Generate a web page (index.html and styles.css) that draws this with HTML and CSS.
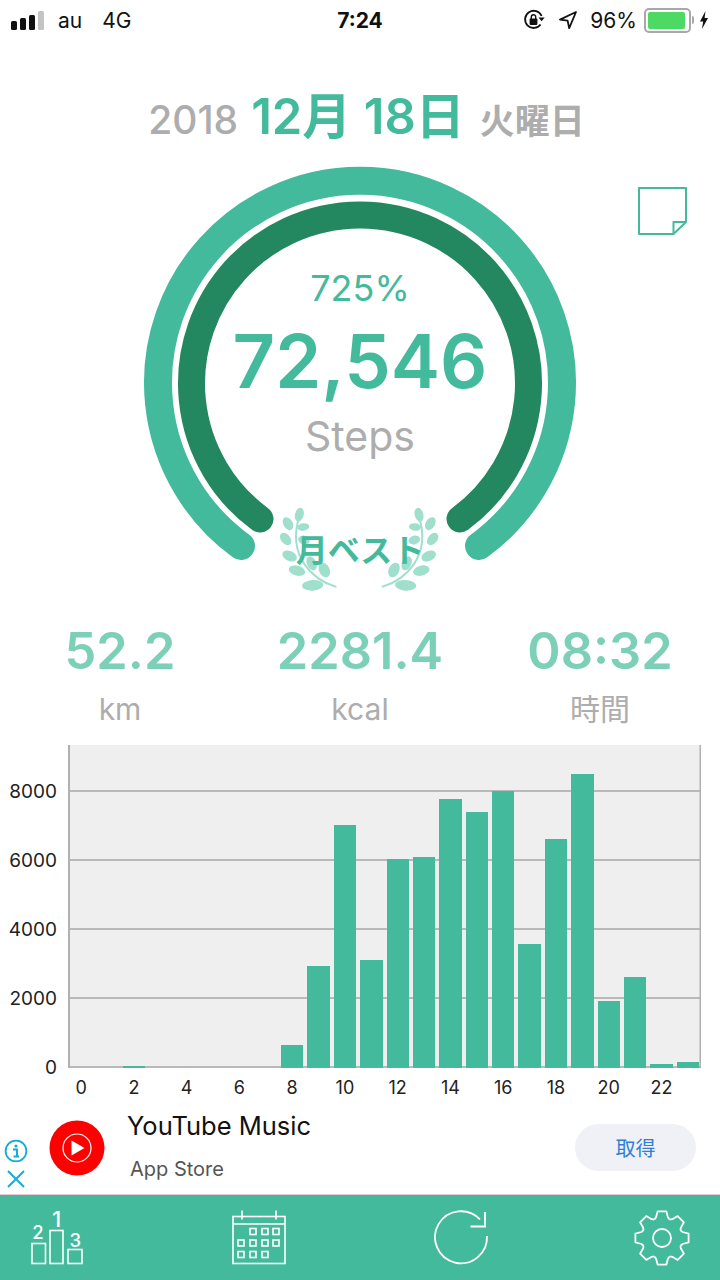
FILE: index.html
```html
<!DOCTYPE html>
<html>
  <head>
    <title>Steps</title>
    <link rel="stylesheet" href="styles.css">
  </head>
  <body>
    <div class="status-bar">
      <div class="status-left">
        <div class="signal">
          <span class="signal-bar signal-1"></span>
          <span class="signal-bar signal-2"></span>
          <span class="signal-bar signal-3"></span>
          <span class="signal-bar signal-4"></span>
        </div>
        <span class="carrier">au</span>
        <span class="network">4G</span>
      </div>
      <div class="status-time">7:24</div>
      <div class="status-right">
        <svg class="lock-icon" width="24" height="24" viewBox="0 0 24 24">
          <path d="M18.6 16.5A8.6 8.6 0 1 1 19.6 8" fill="none" stroke="#111" stroke-width="1.8"/>
          <path d="M16.5 9.5h6.2l-3.1 3.8z" fill="#111"/>
          <rect x="7.6" y="10.6" width="7.8" height="6.4" rx="1" fill="#111"/>
          <path d="M9.3 11V8.9a2.2 2.2 0 0 1 4.4 0V11" fill="none" stroke="#111" stroke-width="1.4"/>
        </svg>
        <svg class="arrow-icon" width="20" height="20" viewBox="0 0 20 20">
          <path d="M18 2 2 9.6l7.6 1 1.6 7.6z" fill="none" stroke="#111" stroke-width="1.8" stroke-linejoin="round"/>
        </svg>
        <span class="battery-text">96%</span>
        <div class="battery">
          <div class="battery-fill"></div>
        </div>
        <div class="battery-tip"></div>
        <svg class="bolt-icon" width="10" height="20" viewBox="0 0 10 20">
          <path d="M6.5 1 1 11.5h3.2L3 19l6-11H5.6z" fill="#111"/>
        </svg>
      </div>
    </div>

    <div class="date-row">
      <span class="date-year">2018</span>
      <span class="date-day">12月 18日</span>
      <span class="date-week">火曜日</span>
    </div>

    <div class="gauge">
      <svg class="gauge-svg" width="720" height="450" viewBox="0 150 720 450">
        <path d="M241 546A202 202 0 1 1 479 546" fill="none" stroke="#43ba9b" stroke-width="28" stroke-linecap="round"/>
        <path d="M260 519A168.5 168.5 0 1 1 460 519" fill="none" stroke="#23875f" stroke-width="27" stroke-linecap="round"/>
        <g transform="translate(220 480) scale(0.3333)">
          <use href="#laurel-left" transform="translate(835 0) scale(-1 1)"/>
          <g id="laurel-left" class="laurel">
            <path d="M347 320C280 300 200 230 238 110" fill="none" stroke="#a0dfcc" stroke-width="6" stroke-linecap="round"/>
            <ellipse cx="238" cy="104" rx="13" ry="21" transform="rotate(15 238 104)"/>
            <ellipse cx="204" cy="131" rx="14" ry="21" transform="rotate(-30 204 131)"/>
            <ellipse cx="250" cy="141" rx="18" ry="11" transform="rotate(-8 250 141)"/>
            <ellipse cx="197" cy="177" rx="14" ry="21" transform="rotate(-40 197 177)"/>
            <ellipse cx="252" cy="180" rx="18" ry="13" transform="rotate(15 252 180)"/>
            <ellipse cx="209" cy="228" rx="23" ry="15" transform="rotate(25 209 228)"/>
            <ellipse cx="275" cy="250" rx="14" ry="22" transform="rotate(-25 275 250)"/>
            <ellipse cx="231" cy="272" rx="25" ry="15" transform="rotate(15 231 272)"/>
            <ellipse cx="313" cy="270" rx="16" ry="23" transform="rotate(-25 313 270)"/>
            <ellipse cx="278" cy="316" rx="32" ry="16" transform="rotate(-4 278 316)"/>
          </g>
        </g>
      </svg>

      <div class="gauge-center">
        <div class="gauge-percent">725%</div>
        <div class="gauge-steps">72,546</div>
        <div class="gauge-unit">Steps</div>
      </div>

      <div class="gauge-best">月ベスト</div>

      <svg class="note-icon" width="50" height="50" viewBox="0 0 50 50">
        <path d="M1 1H48V35L35.5 47H1Z" fill="none" stroke="#43ba9b" stroke-width="2" stroke-linejoin="round"/>
        <path d="M35.5 47V35H48" fill="none" stroke="#43ba9b" stroke-width="2" stroke-linejoin="round"/>
      </svg>
    </div>

    <div class="stats">
      <div class="stat">
        <div class="stat-value">52.2</div>
        <div class="stat-label">km</div>
      </div>
      <div class="stat">
        <div class="stat-value">2281.4</div>
        <div class="stat-label">kcal</div>
      </div>
      <div class="stat">
        <div class="stat-value">08:32</div>
        <div class="stat-label">時間</div>
      </div>
    </div>

    <div class="chart">
      <div class="y-axis">
        <div class="y-label">8000</div>
        <div class="y-label">6000</div>
        <div class="y-label">4000</div>
        <div class="y-label">2000</div>
        <div class="y-label">0</div>
      </div>
      <div class="chart-main">
        <div class="plot">
          <div class="bar"></div>
          <div class="bar"></div>
          <div class="bar" style="height: 2px"></div>
          <div class="bar"></div>
          <div class="bar"></div>
          <div class="bar"></div>
          <div class="bar"></div>
          <div class="bar"></div>
          <div class="bar" style="height: 23px"></div>
          <div class="bar" style="height: 102px"></div>
          <div class="bar" style="height: 243px"></div>
          <div class="bar" style="height: 108px"></div>
          <div class="bar" style="height: 209px"></div>
          <div class="bar" style="height: 211px"></div>
          <div class="bar" style="height: 269px"></div>
          <div class="bar" style="height: 256px"></div>
          <div class="bar" style="height: 277px"></div>
          <div class="bar" style="height: 124px"></div>
          <div class="bar" style="height: 229px"></div>
          <div class="bar" style="height: 294px"></div>
          <div class="bar" style="height: 67px"></div>
          <div class="bar" style="height: 91px"></div>
          <div class="bar" style="height: 4px"></div>
          <div class="bar" style="height: 6px"></div>
        </div>
        <div class="x-axis">
          <div class="x-label">0</div>
          <div class="x-label">2</div>
          <div class="x-label">4</div>
          <div class="x-label">6</div>
          <div class="x-label">8</div>
          <div class="x-label">10</div>
          <div class="x-label">12</div>
          <div class="x-label">14</div>
          <div class="x-label">16</div>
          <div class="x-label">18</div>
          <div class="x-label">20</div>
          <div class="x-label">22</div>
        </div>
      </div>
    </div>

    <div class="ad">
      <div class="ad-controls">
        <svg width="24" height="24" viewBox="0 0 24 24">
          <circle cx="12" cy="12" r="10.4" fill="none" stroke="#12acd6" stroke-width="1.8"/>
          <circle cx="12" cy="7" r="1.6" fill="#12acd6"/>
          <path d="M9 10.5h4V17M9.5 17.5h5.5" fill="none" stroke="#12acd6" stroke-width="2"/>
        </svg>
        <svg width="20" height="20" viewBox="0 0 20 20">
          <path d="M2 2 18 18M18 2 2 18" fill="none" stroke="#12acd6" stroke-width="2"/>
        </svg>
      </div>
      <svg class="ad-logo" width="56" height="56" viewBox="0 0 56 56">
        <circle cx="28" cy="28" r="27.5" fill="#fe0000"/>
        <circle cx="28" cy="28" r="14" fill="none" stroke="white" stroke-width="1.2"/>
        <path d="M22.5 20.5 35.5 28 22.5 35.5Z" fill="white"/>
      </svg>
      <div class="ad-text">
        <div class="ad-title">YouTube Music</div>
        <div class="ad-store">App Store</div>
      </div>
      <button class="ad-button">取得</button>
    </div>

    <div class="tab-bar">
      <svg class="tab-icon" width="54" height="56" viewBox="0 0 54 56">
        <g fill="none" stroke="white" stroke-width="1.6">
          <rect x="1" y="33.5" width="13.5" height="20"/>
          <rect x="19" y="20.5" width="13" height="33"/>
          <rect x="37" y="39.5" width="14" height="14"/>
        </g>
        <text x="7" y="29" class="podium-number">2</text>
        <text x="25.7" y="17" class="podium-first">1</text>
        <text x="44.3" y="36.5" class="podium-number">3</text>
      </svg>
      <svg class="tab-icon" width="54" height="56" viewBox="0 0 54 56">
        <g fill="none" stroke="white" stroke-width="1.6">
          <rect x="1" y="6.5" width="52" height="47"/>
          <path d="M1 14H53M10 0.5V9.5M44 0.5V9.5"/>
          <rect x="18" y="18.5" width="6" height="6"/>
          <rect x="30" y="18.5" width="6" height="6"/>
          <rect x="41" y="18.5" width="6" height="6"/>
          <rect x="6" y="30" width="6" height="6"/>
          <rect x="18" y="30" width="6" height="6"/>
          <rect x="30" y="30" width="6" height="6"/>
          <rect x="41" y="30" width="6" height="6"/>
          <rect x="6" y="41.5" width="6" height="6"/>
          <rect x="18" y="41.5" width="6" height="6"/>
          <rect x="30" y="41.5" width="6" height="6"/>
        </g>
      </svg>
      <svg class="tab-icon" width="54" height="56" viewBox="0 0 54 56">
        <g fill="none" stroke="white" stroke-width="1.8">
          <path d="M53 26A26 26 0 1 1 46 9.5"/>
          <path d="M36.5 16.5H51V2"/>
        </g>
      </svg>
      <svg class="tab-icon" width="54" height="56" viewBox="-27 -28 54 56">
        <defs>
          <polyline id="gear-tooth" points="-7.6,-18.5 -6,-20.6 -4.4,-26.6 4.4,-26.6 6,-20.6 7.6,-18.5" fill="none" stroke="white" stroke-width="1.8" stroke-linejoin="round"/>
        </defs>
        <use href="#gear-tooth"/>
        <use href="#gear-tooth" transform="rotate(45)"/>
        <use href="#gear-tooth" transform="rotate(90)"/>
        <use href="#gear-tooth" transform="rotate(135)"/>
        <use href="#gear-tooth" transform="rotate(180)"/>
        <use href="#gear-tooth" transform="rotate(225)"/>
        <use href="#gear-tooth" transform="rotate(270)"/>
        <use href="#gear-tooth" transform="rotate(315)"/>
        <circle r="9" fill="none" stroke="white" stroke-width="1.8"/>
      </svg>
    </div>
  </body>
</html>
```

FILE: styles.css
```css
body {
  margin: 0;
  width: 720px;
  height: 1280px;
  overflow: hidden;
  background-color: white;
  font-family: Inter, "Noto Sans CJK JP", sans-serif;
}

/* status bar */

.status-bar {
  height: 40px;
  display: grid;
  grid-template-columns: 1fr auto 1fr;
  align-items: center;
  color: #111;
  font-size: 21px;
}

.status-left {
  display: flex;
  align-items: center;
  padding-left: 11px;
}

.signal {
  display: flex;
  align-items: flex-end;
  gap: 3px;
  height: 19px;
  margin-right: 14px;
}

.signal-bar {
  width: 6px;
  background-color: #111;
  border-radius: 1.5px;
}

.signal-1 { height: 9px; }
.signal-2 { height: 12px; }
.signal-3 { height: 15px; }
.signal-4 { height: 19px; background-color: #c4c4c4; }

.carrier {
  margin-right: 20px;
}

.status-time {
  font-weight: 700;
}

.status-right {
  display: flex;
  align-items: center;
  justify-content: flex-end;
  padding-right: 11px;
}

.lock-icon {
  margin-right: 12px;
}

.arrow-icon {
  margin-right: 12px;
}

.battery-text {
  margin-right: 7px;
}

.battery {
  width: 39px;
  height: 17px;
  padding: 2px;
  border: 2px solid #a8a8a8;
  border-radius: 5px;
}

.battery-fill {
  width: 96%;
  height: 100%;
  background-color: #4cd964;
  border-radius: 2px;
}

.battery-tip {
  width: 2px;
  height: 8px;
  margin: 0 5px 0 1px;
  background-color: #a8a8a8;
  border-radius: 0 2px 2px 0;
}

/* date */

.date-row {
  height: 110px;
  display: flex;
  justify-content: center;
  align-items: baseline;
  gap: 13px;
  box-sizing: border-box;
  padding: 37px 0 0 13px;
  color: #adadad;
  font-weight: 500;
}

.date-year {
  font-size: 39px;
}

.date-day {
  color: #43ba9b;
  font-size: 49px;
  font-weight: 600;
}

.date-week {
  margin-left: 2px;
  font-size: 35px;
  font-weight: 700;
}

/* gauge */

.gauge {
  position: relative;
  height: 450px;
}

.gauge-svg {
  display: block;
}

.laurel ellipse {
  fill: #a0dfcc;
}

.gauge-center {
  position: absolute;
  top: 113px;
  left: 0;
  right: 0;
  text-align: center;
}

.gauge-percent {
  height: 50px;
  color: #43ba9b;
  font-size: 36px;
  line-height: 50px;
}

.gauge-steps {
  height: 98px;
  color: #43ba9b;
  font-size: 74px;
  font-weight: 600;
  line-height: 96px;
}

.gauge-unit {
  color: #adadad;
  font-size: 41px;
  line-height: 50px;
}

.gauge-best {
  position: absolute;
  top: 378px;
  left: 0;
  right: 0;
  color: #43ba9b;
  font-size: 32px;
  font-weight: 700;
  line-height: 46px;
  text-align: center;
}

.note-icon {
  position: absolute;
  top: 37px;
  left: 638px;
}

/* stats */

.stats {
  height: 145px;
  display: grid;
  grid-template-columns: repeat(3, 1fr);
  box-sizing: border-box;
  padding-top: 20px;
  text-align: center;
}

.stat-value {
  color: #7dd0b8;
  font-size: 50.5px;
  font-weight: 600;
  line-height: 62px;
}

.stat-label {
  color: #adadad;
  font-size: 30px;
  line-height: 54px;
}

/* chart */

.chart {
  height: 365px;
  display: flex;
}

.y-axis {
  width: 68px;
  height: 323px;
  box-sizing: border-box;
  padding-top: 11.5px;
}

.y-label {
  height: 69px;
  padding-right: 11px;
  color: #222;
  font-size: 19px;
  line-height: 69px;
  text-align: right;
}

.chart-main {
  width: 633px;
}

.plot {
  height: 323px;
  display: flex;
  align-items: flex-end;
  background-color: #efefef;
  background-image: linear-gradient(to top, #b9b9b9 1.5px, transparent 1.5px);
  background-size: 100% 69px;
  background-position: left bottom;
  box-shadow: inset 2px 0 #b0b0b0, inset -1.5px 0 #b0b0b0;
}

.bar {
  flex: 1;
  margin: 0 2px;
  background-color: #43ba9b;
}

.x-axis {
  display: flex;
  height: 40px;
}

.x-label {
  width: 26.375px;
  margin-right: 26.375px;
  color: #222;
  font-size: 18px;
  line-height: 40px;
  text-align: center;
}

/* ad */

.ad {
  height: 85px;
  display: flex;
  align-items: center;
  box-sizing: border-box;
  padding-right: 24px;
  border-bottom: 1px solid #e8c8d0;
}

.ad-controls {
  width: 32px;
  height: 84px;
  display: flex;
  flex-direction: column;
  align-items: center;
  justify-content: flex-end;
  gap: 6px;
  box-sizing: border-box;
  padding-bottom: 5px;
}

.ad-logo {
  margin: 0 0 8px 17px;
}

.ad-text {
  flex: 1;
  align-self: flex-start;
  padding-left: 22px;
}

.ad-title {
  color: #111;
  font-size: 25.5px;
  line-height: 32px;
}

.ad-store {
  padding: 12px 0 0 3px;
  color: #555;
  font-size: 20px;
  line-height: 30px;
}

.ad-button {
  width: 121px;
  height: 47px;
  margin-bottom: 10px;
  padding: 0;
  border: none;
  border-radius: 24px;
  background-color: #eff1f6;
  color: #2f7fd8;
  font-family: "Noto Sans CJK JP", sans-serif;
  font-size: 20px;
}

/* tab bar */

.tab-bar {
  height: 85px;
  display: flex;
  justify-content: space-between;
  align-items: center;
  padding: 0 31px;
  background-color: #43ba9b;
}

.tab-icon {
  display: block;
  overflow: visible;
}

.podium-number,
.podium-first {
  fill: white;
  font-size: 18.5px;
  font-weight: 500;
  text-anchor: middle;
}

.podium-first {
  font-size: 21.5px;
}
```
